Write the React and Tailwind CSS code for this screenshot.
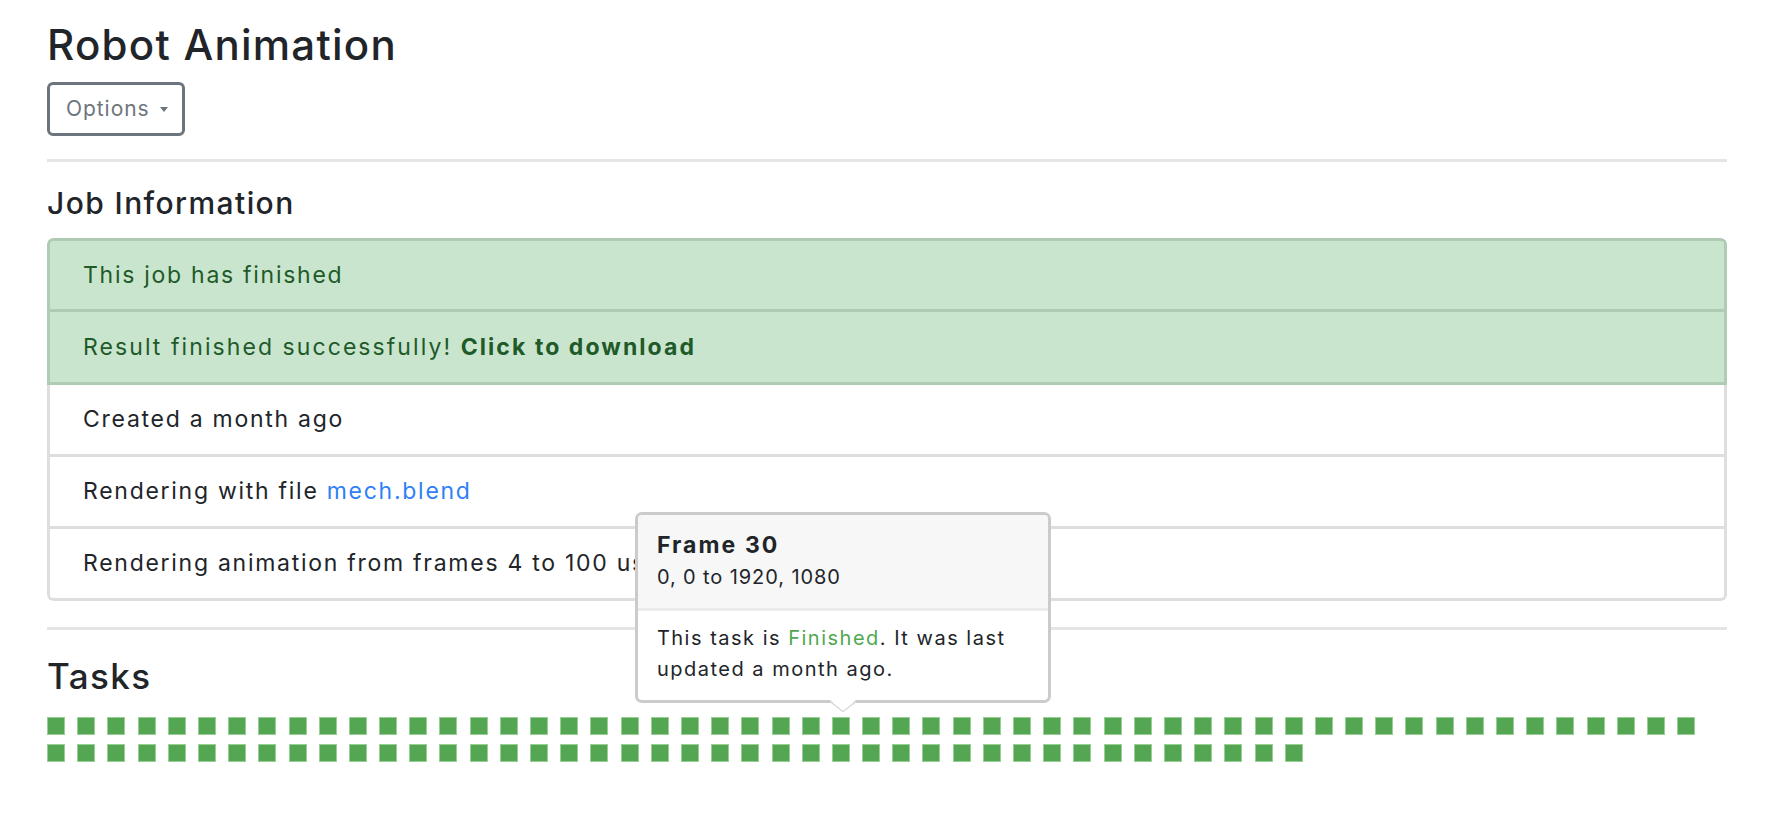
import React from "react";

const FONT = { fontFamily: "Inter, 'Noto Sans', sans-serif" };

const frames = Array.from({ length: 97 }, (_, i) => i + 4);

const Tooltip = () => (
  <div className="absolute bottom-[calc(100%+15px)] left-1/2 -translate-x-1/2 ml-[2px] w-[416px] z-10">
    <div className="rounded-[7px] border-[3px] border-[#cbcbcb] bg-white overflow-hidden">
      <div className="bg-[#f7f7f7] border-b-[3px] border-[#ebebeb] px-[19px] pt-[14px] pb-[15px]">
        <div className="text-[23px] leading-[33px] font-bold text-[#212529] tracking-[0.09em]">Frame 30</div>
        <div className="text-[20px] leading-[31px] text-[#212529] tracking-[0.045em]">0, 0 to 1920, 1080</div>
      </div>
      <div className="px-[19px] pt-[12px] pb-[15px] text-[20px] leading-[31px] text-[#212529] tracking-[0.075em]">
        This task is <span className="text-[#4fa84f]">Finished</span>. It was last updated a month ago.
      </div>
    </div>
    <svg className="absolute left-1/2 -translate-x-1/2 top-[calc(100%-3px)]" width="26" height="14" viewBox="0 0 26 14">
      <polygon points="0,0 13,11 26,0" fill="#ffffff" />
      <path d="M0 1.5 L13 11.5 L26 1.5" fill="none" stroke="#dcdcdc" strokeWidth="1.5" />
    </svg>
  </div>
);

const Row = ({ children, green, first, last, height, wide }) => (
  <div
    className={
      "flex items-center px-[33px] border-x-[3px] border-b-[3px] text-[23px] " +
      height + " " +
      (wide ? "tracking-[0.09em] " : "tracking-[0.075em] ") +
      (first ? "border-t-[3px] rounded-t-[6px] " : "") +
      (last ? "rounded-b-[6px] " : "") +
      (green ? "bg-[#c9e5ce] border-[#b0cbb4] text-[#1f5a29]" : "bg-white border-[#dedede] text-[#212529]")
    }
  >
    {children}
  </div>
);

export default function App() {
  return (
    <div className="min-h-screen bg-white pl-[47px] pr-[45px] pt-[20px]" style={FONT}>
      <h1 className="text-[42px] leading-[49px] font-medium text-[#212529] tracking-[0.03em]">Robot Animation</h1>

      <button className="mt-[13px] h-[54px] flex items-center gap-[10px] pl-[16px] pr-[14px] rounded-[6px] border-[3px] border-[#6c757d] text-[#6c757d] text-[21px] tracking-[0.045em] bg-white">
        Options
        <span className="w-0 h-0 border-x-[4.5px] border-x-transparent border-t-[5px] border-t-[#6c757d]" />
      </button>

      <div className="mt-[23px] h-[3px] bg-[#e5e5e5]" />

      <h2 className="mt-[23px] text-[30px] leading-[36px] font-medium text-[#212529] tracking-[0.047em]">Job Information</h2>

      <div className="mt-[17px] rounded-[6px] overflow-hidden">
        <Row green first height="h-[74px]">This job has finished</Row>
        <Row green wide height="h-[73px]">
          <span>
            Result finished successfully! <a href="#" className="font-bold text-[#1f5a29]">Click to download</a>
          </span>
        </Row>
        <Row height="h-[72px]">Created a month ago</Row>
        <Row height="h-[72px]">
          <span>
            Rendering with file <a href="#" className="text-[#2f7ff7]">mech.blend</a>
          </span>
        </Row>
        <Row last height="h-[72px]">Rendering animation from frames 4 to 100 using Cycles</Row>
      </div>

      <div className="mt-[26px] h-[3px] bg-[#e5e5e5]" />

      <h2 className="mt-[25px] text-[35px] leading-[42px] font-medium text-[#212529] tracking-[0.04em]">Tasks</h2>

      <div className="mt-[20px] w-[1676px] flex flex-wrap gap-x-[12.2px] gap-y-[9px]">
        {frames.map((f) => (
          <div
            key={f}
            title={"Frame " + f}
            className="relative w-[18px] h-[18px] bg-[#54a653] border border-[#97cf95]"
          >
            {f === 30 && <Tooltip />}
          </div>
        ))}
      </div>
    </div>
  );
}
